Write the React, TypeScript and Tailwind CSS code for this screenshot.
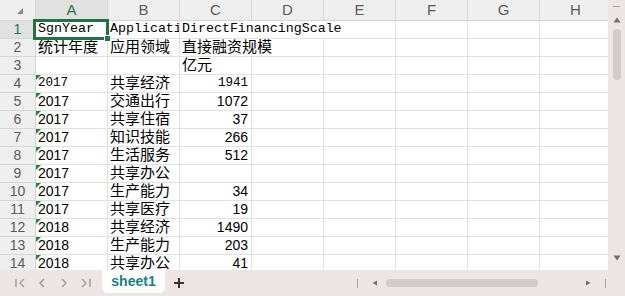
const COLS = ["A", "B", "C", "D", "E", "F", "G", "H"];

type Row = { a?: string; b?: string; c?: string; flag?: boolean; mono?: boolean; wide?: boolean };

const ROWS: Row[] = [
  { a: "统计年度", b: "应用领域", c: "直接融资规模", wide: true },
  { c: "亿元" },
  { a: "2017", b: "共享经济", c: "1941", flag: true, mono: true },
  { a: "2017", b: "交通出行", c: "1072", flag: true },
  { a: "2017", b: "共享住宿", c: "37", flag: true },
  { a: "2017", b: "知识技能", c: "266", flag: true },
  { a: "2017", b: "生活服务", c: "512", flag: true },
  { a: "2017", b: "共享办公", flag: true },
  { a: "2017", b: "生产能力", c: "34", flag: true },
  { a: "2017", b: "共享医疗", c: "19", flag: true },
  { a: "2018", b: "共享经济", c: "1490", flag: true },
  { a: "2018", b: "生产能力", c: "203", flag: true },
  { a: "2018", b: "共享办公", c: "41", flag: true },
];

const isNum = (s?: string) => !!s && /^\d+$/.test(s);

const cellFont = "font-['Liberation_Sans','Noto_Sans_CJK_SC',sans-serif]";
const monoFont = "font-['Liberation_Mono','Noto_Sans_CJK_SC',monospace]";

function Cell({
  value,
  right,
  flag,
  mono,
  wide,
}: {
  value?: string;
  right?: boolean;
  flag?: boolean;
  mono?: boolean;
  wide?: boolean;
}) {
  const cjk = !!value && !isNum(value);
  return (
    <div
      className={`relative flex h-[18px] items-end overflow-hidden whitespace-nowrap border-r border-b border-[#e2e2e2] pb-[1px] leading-[16px] text-black ${
        wide ? "col-span-2" : ""
      } ${right ? "justify-end pr-[3px]" : "pl-[2px]"} ${
        mono ? `${monoFont} text-[12.5px]` : `${cellFont} ${cjk ? "text-[15px]" : "text-[14px]"}`
      }`}
    >
      {flag && (
        <span className="absolute left-0 top-0 h-0 w-0 border-t-[5px] border-r-[5px] border-t-[#1f8a3c] border-r-transparent" />
      )}
      {value}
    </div>
  );
}

function VScroll() {
  return (
    <div className="flex w-[17px] flex-col items-center bg-[#ede6e4] pt-[6px]">
      <div className="h-[1px] w-[7px] bg-[#a9a5a4]" />
      <svg width="8" height="6" viewBox="0 0 8 6" className="mt-[10px]">
        <path d="M4 0.5 7.5 5.5H0.5z" fill="#6f6f6f" />
      </svg>
      <div className="mt-[6px] h-[51px] w-[8px] rounded-full bg-[#d3cccb]" />
      <div className="flex-1" />
      <svg width="8" height="6" viewBox="0 0 8 6" className="mb-[9px]">
        <path d="M0.5 0.5H7.5L4 5.5z" fill="#6f6f6f" />
      </svg>
    </div>
  );
}

function NavIcon({ d }: { d: string }) {
  return (
    <svg width="12" height="12" viewBox="0 0 12 12" fill="none" stroke="#a2a2a2" strokeWidth="1.6" strokeLinecap="round" strokeLinejoin="round">
      <path d={d} />
    </svg>
  );
}

export default function App() {
  return (
    <div className={`flex h-[296px] w-[625px] flex-col overflow-hidden bg-white ${cellFont}`}>
      <div className="flex h-[270px]">
        <div className="relative w-[608px] overflow-hidden">
          <div className="grid w-[612px] grid-cols-[36px_repeat(8,72px)]">
            {/* header row */}
            <div className="flex h-[21px] items-center justify-center border-r border-b border-[#d6d6d6] bg-[#efefef]">
              <svg width="8" height="8" viewBox="0 0 8 8" className="mt-[1px] ml-[4px]">
                <path d="M7 1V7H1z" fill="#8c8c8c" />
              </svg>
            </div>
            {COLS.map((c) => (
              <div
                key={c}
                className={`flex h-[21px] items-center justify-center border-r border-b border-[#d6d6d6] text-[15px] ${
                  c === "A" ? "bg-[#e1e1e1] text-[#1e7b4a]" : "bg-[#efefef] text-[#5c5c5c]"
                }`}
              >
                {c}
              </div>
            ))}

            {/* row 1 */}
            <div className="flex h-[18px] items-center justify-center border-r border-b border-[#d6d6d6] bg-[#e1e1e1] text-[14px] text-[#1e7b4a]">
              1
            </div>
            <div className={`flex h-[18px] items-end border-r border-b border-[#e2e2e2] pb-[1px] pl-[2px] leading-[16px] whitespace-nowrap ${monoFont} text-[13.3px]`}>
              SgnYear
            </div>
            <div className={`flex h-[18px] items-end overflow-hidden border-r border-b border-[#e2e2e2] pb-[1px] pl-[2px] leading-[16px] whitespace-nowrap ${monoFont} text-[13.3px]`}>
              Applicati
            </div>
            <div className={`col-span-3 flex h-[18px] items-end border-r border-b border-[#e2e2e2] pb-[1px] pl-[2px] leading-[16px] whitespace-nowrap ${monoFont} text-[13.3px]`}>
              DirectFinancingScale
            </div>
            <Cell />
            <Cell />
            <Cell />

            {ROWS.map((r, i) => (
              <div key={i} className="contents">
                <div className="flex h-[18px] items-center justify-center border-r border-b border-[#d6d6d6] bg-[#efefef] text-[14px] text-[#5c5c5c]">
                  {i + 2}
                </div>
                <Cell value={r.a} flag={r.flag} mono={r.mono} />
                <Cell value={r.b} />
                <Cell value={r.c} right={isNum(r.c)} mono={r.mono} wide={r.wide} />
                {!r.wide && <Cell />}
                <Cell />
                <Cell />
                <Cell />
                <Cell />
              </div>
            ))}
          </div>

          {/* active cell A1 */}
          <div className="absolute left-[33px] top-[19px] h-[21px] w-[76px] border-[3px] border-[#217346]" />
          <div className="absolute left-[104px] top-[35px] h-[7px] w-[7px] border border-white bg-[#217346]" />
        </div>
        <VScroll />
      </div>

      {/* sheet tabs */}
      <div className="flex h-[26px] items-start bg-[#ede6e4]">
        <div className="flex h-[26px] items-center gap-[10px] pl-[14px]">
          <NavIcon d="M2 2.5v7M9.5 2.5 6 6l3.5 3.5" />
          <NavIcon d="M7.5 2.5 4 6l3.5 3.5" />
          <NavIcon d="M4.5 2.5 8 6l-3.5 3.5" />
          <NavIcon d="M2.5 2.5 6 6l-3.5 3.5M10 2.5v7" />
        </div>
        <div className="ml-[10px] flex h-[23px] w-[63px] items-center justify-center rounded-b-[6px] bg-white text-[14px] font-bold text-[#16817f]">
          sheet1
        </div>
        <div className="ml-[8px] flex h-[26px] items-center">
          <svg width="12" height="12" viewBox="0 0 12 12" stroke="#333" strokeWidth="2">
            <path d="M6 1v10M1 6h10" />
          </svg>
        </div>
        <div className="flex-1" />
        <div className="flex h-[26px] items-center pr-[19px]">
          <div className="h-[9px] w-[1px] bg-[#a9a5a4]" />
          <svg width="6" height="6" viewBox="0 0 6 6" className="ml-[14px]">
            <path d="M0.5 3 5 0.5v5z" fill="#6f6f6f" />
          </svg>
          <div className="ml-[8px] h-[8px] w-[152px] rounded-full bg-[#d3cccb]" />
          <svg width="6" height="6" viewBox="0 0 6 6" className="ml-[47px]">
            <path d="M5.5 3 1 0.5v5z" fill="#6f6f6f" />
          </svg>
          <div className="ml-[14px] h-[9px] w-[1px] bg-[#a9a5a4]" />
        </div>
      </div>
    </div>
  );
}
